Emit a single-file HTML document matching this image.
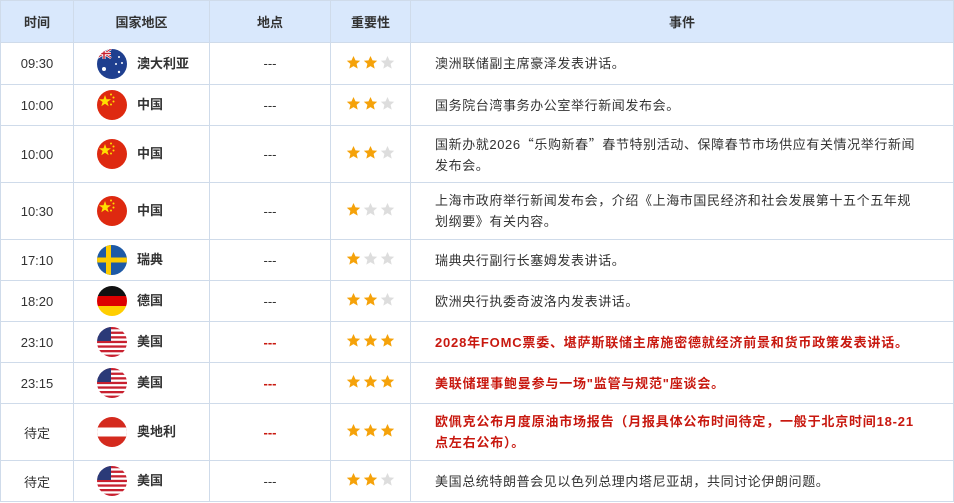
<!DOCTYPE html>
<html><head><meta charset="utf-8"><style>
body{margin:0;background:#fff;font-family:"Liberation Sans","Noto Sans CJK SC",sans-serif;font-size:13px;color:#333}
table{border-collapse:collapse;position:absolute;left:0;top:0;width:954px;table-layout:fixed}
td,th{border:1px solid #cfdbea;text-align:center;padding:0}
th{background:#d9e8fc;height:41px;font-weight:bold;font-size:13px;color:#333}
td.ev{text-align:left;padding-left:24px;padding-right:36px;line-height:21px;letter-spacing:0.6px}
.r td.ev{color:#c8180f;font-weight:bold;letter-spacing:0.8px;padding-right:14px}
.r .loc{color:#c8180f;font-weight:bold}
.q{font-family:"Noto Sans CJK SC",sans-serif}
.c{display:flex;align-items:center;padding-left:23px;font-weight:bold;line-height:16px}
.f{display:block;width:30px;height:30px;border-radius:50%;margin-right:10px;overflow:hidden;flex:none}
.st{display:inline-block;vertical-align:middle;width:15px;height:15px;margin:0 1px;position:relative;top:-2px}
</style></head><body>
<svg width="0" height="0" style="position:absolute"><defs>
<symbol id="s" viewBox="0 0 24 24"><path d="M12 1.5l3.2 7 7.5.7-5.7 5 1.7 7.5L12 17.8 5.3 21.7 7 14.2l-5.7-5 7.5-.7z"/></symbol>
<symbol id="us" viewBox="0 0 30 30"><rect width="30" height="30" fill="#fff"/><g fill="#c8202f"><rect y="0" width="30" height="2.3"/><rect y="4.6" width="30" height="2.3"/><rect y="9.2" width="30" height="2.3"/><rect y="13.8" width="30" height="2.3"/><rect y="18.4" width="30" height="2.3"/><rect y="23" width="30" height="2.3"/><rect y="27.6" width="30" height="2.4"/></g><rect width="14" height="14" fill="#2b3a78"/></symbol>
<symbol id="cn" viewBox="0 0 30 30"><rect width="30" height="30" fill="#de2910"/><path fill="#ffde00" d="M8 5l1.5 4.3h4.5l-3.6 2.7 1.3 4.3L8 13.7l-3.7 2.6 1.3-4.3L2 9.3h4.5z"/><circle cx="14" cy="4.5" r="1" fill="#ffde00"/><circle cx="16.5" cy="7.5" r="1" fill="#ffde00"/><circle cx="16.5" cy="11.5" r="1" fill="#ffde00"/><circle cx="14" cy="14.5" r="1" fill="#ffde00"/></symbol>
<symbol id="au" viewBox="0 0 30 30"><rect width="30" height="30" fill="#1f3f8f"/><path d="M0 0L14 9M14 0L0 9" stroke="#fff" stroke-width="2.5"/><path d="M0 0L14 9M14 0L0 9" stroke="#c8202f" stroke-width="1"/><path d="M7 0v10M0 4.5h14" stroke="#fff" stroke-width="3"/><path d="M7 0v10M0 4.5h14" stroke="#c8202f" stroke-width="1.5"/><g fill="#fff"><circle cx="7" cy="20" r="2"/><circle cx="22" cy="8" r="1"/><circle cx="19" cy="15" r="1"/><circle cx="25" cy="14" r="1"/><circle cx="22" cy="23" r="1.2"/></g></symbol>
<symbol id="se" viewBox="0 0 30 30"><rect width="30" height="30" fill="#1f5aa6"/><rect x="9" width="5" height="30" fill="#fecc00"/><rect y="12.5" width="30" height="5" fill="#fecc00"/></symbol>
<symbol id="de" viewBox="0 0 30 30"><rect width="30" height="10" fill="#111"/><rect y="10" width="30" height="10" fill="#dd0000"/><rect y="20" width="30" height="10" fill="#ffce00"/></symbol>
<symbol id="at" viewBox="0 0 30 30"><rect width="30" height="30" fill="#d42a1e"/><rect y="10.5" width="30" height="9" fill="#fff"/></symbol>
</defs></svg>
<table>
<colgroup><col style="width:73px"><col style="width:136px"><col style="width:121px"><col style="width:80px"><col></colgroup>
<tr><th>时间</th><th>国家地区</th><th>地点</th><th>重要性</th><th>事件</th></tr>
<tr style="height:42px"><td>09:30</td><td><div class="c"><svg class="f"><use href="#au"/></svg><span>澳大利亚</span></div></td><td>---</td><td><svg class="st" fill="#f5a20a"><use href="#s"/></svg><svg class="st" fill="#f5a20a"><use href="#s"/></svg><svg class="st" fill="#ddd"><use href="#s"/></svg></td><td class="ev">澳洲联储副主席豪泽发表讲话。</td></tr>
<tr style="height:41px"><td>10:00</td><td><div class="c"><svg class="f"><use href="#cn"/></svg><span>中国</span></div></td><td>---</td><td><svg class="st" fill="#f5a20a"><use href="#s"/></svg><svg class="st" fill="#f5a20a"><use href="#s"/></svg><svg class="st" fill="#ddd"><use href="#s"/></svg></td><td class="ev">国务院台湾事务办公室举行新闻发布会。</td></tr>
<tr style="height:57px"><td>10:00</td><td><div class="c"><svg class="f"><use href="#cn"/></svg><span>中国</span></div></td><td>---</td><td><svg class="st" fill="#f5a20a"><use href="#s"/></svg><svg class="st" fill="#f5a20a"><use href="#s"/></svg><svg class="st" fill="#ddd"><use href="#s"/></svg></td><td class="ev">国新办就2026<span class="q">“</span>乐购新春<span class="q">”</span>春节特别活动、保障春节市场供应有关情况举行新闻发布会。</td></tr>
<tr style="height:57px"><td>10:30</td><td><div class="c"><svg class="f"><use href="#cn"/></svg><span>中国</span></div></td><td>---</td><td><svg class="st" fill="#f5a20a"><use href="#s"/></svg><svg class="st" fill="#ddd"><use href="#s"/></svg><svg class="st" fill="#ddd"><use href="#s"/></svg></td><td class="ev">上海市政府举行新闻发布会，介绍《上海市国民经济和社会发展第十五个五年规划纲要》有关内容。</td></tr>
<tr style="height:41px"><td>17:10</td><td><div class="c"><svg class="f"><use href="#se"/></svg><span>瑞典</span></div></td><td>---</td><td><svg class="st" fill="#f5a20a"><use href="#s"/></svg><svg class="st" fill="#ddd"><use href="#s"/></svg><svg class="st" fill="#ddd"><use href="#s"/></svg></td><td class="ev">瑞典央行副行长塞姆发表讲话。</td></tr>
<tr style="height:41px"><td>18:20</td><td><div class="c"><svg class="f"><use href="#de"/></svg><span>德国</span></div></td><td>---</td><td><svg class="st" fill="#f5a20a"><use href="#s"/></svg><svg class="st" fill="#f5a20a"><use href="#s"/></svg><svg class="st" fill="#ddd"><use href="#s"/></svg></td><td class="ev">欧洲央行执委奇波洛内发表讲话。</td></tr>
<tr class="r" style="height:41px"><td>23:10</td><td><div class="c"><svg class="f"><use href="#us"/></svg><span>美国</span></div></td><td class="loc">---</td><td><svg class="st" fill="#f5a20a"><use href="#s"/></svg><svg class="st" fill="#f5a20a"><use href="#s"/></svg><svg class="st" fill="#f5a20a"><use href="#s"/></svg></td><td class="ev">2028年FOMC票委、堪萨斯联储主席施密德就经济前景和货币政策发表讲话。</td></tr>
<tr class="r" style="height:41px"><td>23:15</td><td><div class="c"><svg class="f"><use href="#us"/></svg><span>美国</span></div></td><td class="loc">---</td><td><svg class="st" fill="#f5a20a"><use href="#s"/></svg><svg class="st" fill="#f5a20a"><use href="#s"/></svg><svg class="st" fill="#f5a20a"><use href="#s"/></svg></td><td class="ev">美联储理事鲍曼参与一场"监管与规范"座谈会。</td></tr>
<tr class="r" style="height:57px"><td>待定</td><td><div class="c"><svg class="f"><use href="#at"/></svg><span>奥地利</span></div></td><td class="loc">---</td><td><svg class="st" fill="#f5a20a"><use href="#s"/></svg><svg class="st" fill="#f5a20a"><use href="#s"/></svg><svg class="st" fill="#f5a20a"><use href="#s"/></svg></td><td class="ev">欧佩克公布月度原油市场报告（月报具体公布时间待定，一般于北京时间18-21<br>点左右公布）。</td></tr>
<tr style="height:41px"><td>待定</td><td><div class="c"><svg class="f"><use href="#us"/></svg><span>美国</span></div></td><td>---</td><td><svg class="st" fill="#f5a20a"><use href="#s"/></svg><svg class="st" fill="#f5a20a"><use href="#s"/></svg><svg class="st" fill="#ddd"><use href="#s"/></svg></td><td class="ev">美国总统特朗普会见以色列总理内塔尼亚胡，共同讨论伊朗问题。</td></tr>
</table>
</body></html>
